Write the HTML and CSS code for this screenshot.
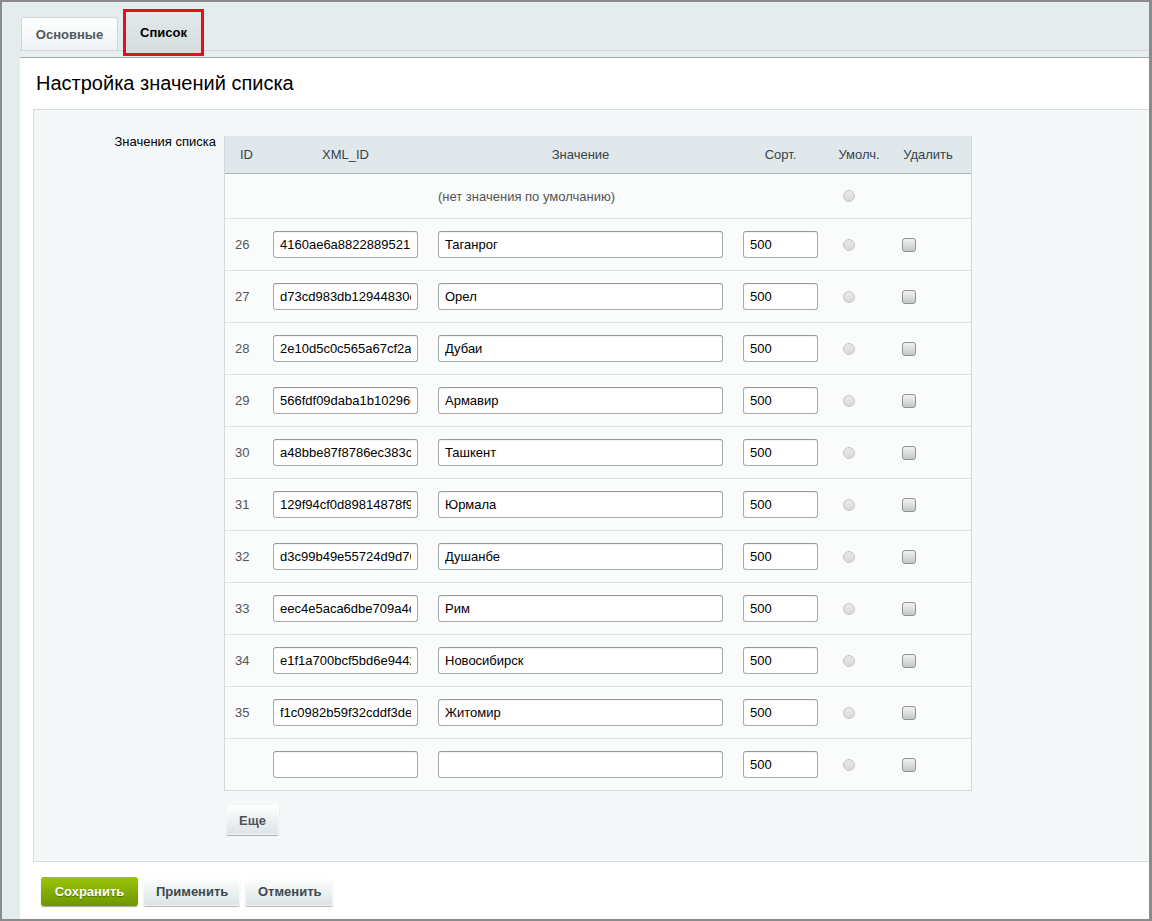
FILE: index.html
```html
<!DOCTYPE html>
<html lang="ru">
<head>
    <meta charset="UTF-8">
    <title>Настройка значений списка</title>
    <link rel="stylesheet" href="styles.css">
</head>
<body>
    <div class="window">
        <div class="tabs">
            <div class="tab">Основные</div>
            <div class="tab tab-active">Список</div>
        </div>
        <div class="tab-line"></div>

        <div class="content">
            <h1 class="title">Настройка значений списка</h1>

            <div class="panel">
                <div class="field-label">Значения списка</div>
                <div class="field">
                    <div class="list-wrap">
                        <table class="list">
                            <colgroup>
                                <col class="c-id">
                                <col class="c-xml">
                                <col class="c-val">
                                <col class="c-sort">
                                <col class="c-def">
                                <col class="c-del">
                            </colgroup>
                            <thead>
                                <tr>
                                    <th class="h-id">ID</th>
                                    <th class="h-xml">XML_ID</th>
                                    <th>Значение</th>
                                    <th>Сорт.</th>
                                    <th class="h-def">Умолч.</th>
                                    <th class="h-del">Удалить</th>
                                </tr>
                            </thead>
                            <tbody>
                                <tr class="row-none">
                                    <td colspan="4" class="none-text">(нет значения по умолчанию)</td>
                                    <td class="td-def"><input type="radio" name="def" class="radio"></td>
                                    <td></td>
                                </tr>
                                <tr>
                                    <td class="td-id">26</td>
                                    <td class="td-xml"><input class="inp inp-xml" type="text" value="4160ae6a88228895213cf0b1e4a7d2f6"></td>
                                    <td class="td-val"><input class="inp inp-val" type="text" value="Таганрог"></td>
                                    <td class="td-sort"><input class="inp inp-sort" type="text" value="500"></td>
                                    <td class="td-def"><input type="radio" name="def" class="radio"></td>
                                    <td class="td-del"><input type="checkbox" class="check"></td>
                                </tr>
                                <tr>
                                    <td class="td-id">27</td>
                                    <td class="td-xml"><input class="inp inp-xml" type="text" value="d73cd983db12944830c5e7a19b02f4d8"></td>
                                    <td class="td-val"><input class="inp inp-val" type="text" value="Орел"></td>
                                    <td class="td-sort"><input class="inp inp-sort" type="text" value="500"></td>
                                    <td class="td-def"><input type="radio" name="def" class="radio"></td>
                                    <td class="td-del"><input type="checkbox" class="check"></td>
                                </tr>
                                <tr>
                                    <td class="td-id">28</td>
                                    <td class="td-xml"><input class="inp inp-xml" type="text" value="2e10d5c0c565a67cf2a4b91d07e3c6f5"></td>
                                    <td class="td-val"><input class="inp inp-val" type="text" value="Дубаи"></td>
                                    <td class="td-sort"><input class="inp inp-sort" type="text" value="500"></td>
                                    <td class="td-def"><input type="radio" name="def" class="radio"></td>
                                    <td class="td-del"><input type="checkbox" class="check"></td>
                                </tr>
                                <tr>
                                    <td class="td-id">29</td>
                                    <td class="td-xml"><input class="inp inp-xml" type="text" value="566fdf09daba1b102960e8c4a3f7b215"></td>
                                    <td class="td-val"><input class="inp inp-val" type="text" value="Армавир"></td>
                                    <td class="td-sort"><input class="inp inp-sort" type="text" value="500"></td>
                                    <td class="td-def"><input type="radio" name="def" class="radio"></td>
                                    <td class="td-del"><input type="checkbox" class="check"></td>
                                </tr>
                                <tr>
                                    <td class="td-id">30</td>
                                    <td class="td-xml"><input class="inp inp-xml" type="text" value="a48bbe87f8786ec383c1d92f5b0e6a47"></td>
                                    <td class="td-val"><input class="inp inp-val" type="text" value="Ташкент"></td>
                                    <td class="td-sort"><input class="inp inp-sort" type="text" value="500"></td>
                                    <td class="td-def"><input type="radio" name="def" class="radio"></td>
                                    <td class="td-del"><input type="checkbox" class="check"></td>
                                </tr>
                                <tr>
                                    <td class="td-id">31</td>
                                    <td class="td-xml"><input class="inp inp-xml" type="text" value="129f94cf0d89814878f93a6e2c5b1d07"></td>
                                    <td class="td-val"><input class="inp inp-val" type="text" value="Юрмала"></td>
                                    <td class="td-sort"><input class="inp inp-sort" type="text" value="500"></td>
                                    <td class="td-def"><input type="radio" name="def" class="radio"></td>
                                    <td class="td-del"><input type="checkbox" class="check"></td>
                                </tr>
                                <tr>
                                    <td class="td-id">32</td>
                                    <td class="td-xml"><input class="inp inp-xml" type="text" value="d3c99b49e55724d9d76a0f81c2e4b5a3"></td>
                                    <td class="td-val"><input class="inp inp-val" type="text" value="Душанбе"></td>
                                    <td class="td-sort"><input class="inp inp-sort" type="text" value="500"></td>
                                    <td class="td-def"><input type="radio" name="def" class="radio"></td>
                                    <td class="td-del"><input type="checkbox" class="check"></td>
                                </tr>
                                <tr>
                                    <td class="td-id">33</td>
                                    <td class="td-xml"><input class="inp inp-xml" type="text" value="eec4e5aca6dbe709a4c3b8f2d1e0a956"></td>
                                    <td class="td-val"><input class="inp inp-val" type="text" value="Рим"></td>
                                    <td class="td-sort"><input class="inp inp-sort" type="text" value="500"></td>
                                    <td class="td-def"><input type="radio" name="def" class="radio"></td>
                                    <td class="td-del"><input type="checkbox" class="check"></td>
                                </tr>
                                <tr>
                                    <td class="td-id">34</td>
                                    <td class="td-xml"><input class="inp inp-xml" type="text" value="e1f1a700bcf5bd6e94421c7d8a3b0f65"></td>
                                    <td class="td-val"><input class="inp inp-val" type="text" value="Новосибирск"></td>
                                    <td class="td-sort"><input class="inp inp-sort" type="text" value="500"></td>
                                    <td class="td-def"><input type="radio" name="def" class="radio"></td>
                                    <td class="td-del"><input type="checkbox" class="check"></td>
                                </tr>
                                <tr>
                                    <td class="td-id">35</td>
                                    <td class="td-xml"><input class="inp inp-xml" type="text" value="f1c0982b59f32cddf3de7a4b6e1c0d28"></td>
                                    <td class="td-val"><input class="inp inp-val" type="text" value="Житомир"></td>
                                    <td class="td-sort"><input class="inp inp-sort" type="text" value="500"></td>
                                    <td class="td-def"><input type="radio" name="def" class="radio"></td>
                                    <td class="td-del"><input type="checkbox" class="check"></td>
                                </tr>
                                <tr>
                                    <td class="td-id"></td>
                                    <td class="td-xml"><input class="inp inp-xml" type="text" value=""></td>
                                    <td class="td-val"><input class="inp inp-val" type="text" value=""></td>
                                    <td class="td-sort"><input class="inp inp-sort" type="text" value="500"></td>
                                    <td class="td-def"><input type="radio" name="def" class="radio"></td>
                                    <td class="td-del"><input type="checkbox" class="check"></td>
                                </tr>
                            </tbody>
                        </table>
                    </div>
                    <button class="btn btn-more" type="button">Еще</button>
                </div>
            </div>

            <div class="actions">
                <button class="btn btn-save" type="button">Сохранить</button>
                <button class="btn" type="button">Применить</button>
                <button class="btn" type="button">Отменить</button>
            </div>
        </div>
    </div>
</body>
</html>
```

FILE: styles.css
```css
body {
    margin: 0;
    font-family: "Liberation Sans", Arial, sans-serif;
    font-size: 13px;
    color: #000;
}

.window {
    width: 1152px;
    height: 921px;
    box-sizing: border-box;
    border: 2px solid #8b8b8b;
    border-right-width: 3px;
    background: #e5ecee;
    padding-left: 18px;
    display: flex;
    flex-direction: column;
}

/* tabs */
.tabs {
    height: 48px;
    display: flex;
    align-items: flex-end;
    gap: 5px;
    padding-left: 1px;
}

.tab {
    width: 97px;
    height: 33px;
    box-sizing: border-box;
    border: 1px solid #cfd7da;
    border-bottom: none;
    border-radius: 3px 3px 0 0;
    background: linear-gradient(#ffffff, #eef2f3);
    display: flex;
    align-items: center;
    justify-content: center;
    font-weight: bold;
    color: #4d5a60;
}

.tab-active {
    width: 81px;
    height: 47px;
    margin-bottom: -6px;
    border: 3px solid #e3101a;
    border-radius: 0;
    background: linear-gradient(#e3e9eb, #d4dcdf);
    color: #000;
    position: relative;
    z-index: 1;
}

.tab-line {
    height: 6px;
    background: #e9eff1;
    border-top: 1px solid #d0d8db;
    border-bottom: 1px solid #a0a9ac;
}

/* content */
.content {
    flex: 1;
    background: #fff;
}

.title {
    margin: 0;
    padding: 13px 0 14px 16px;
    font-size: 20px;
    font-weight: normal;
    line-height: 24px;
}

.panel {
    margin-left: 13px;
    height: 753px;
    box-sizing: border-box;
    border: 1px solid #d6dee1;
    border-right: none;
    background: #f5f8f9;
    padding-top: 26px;
    display: flex;
}

.field-label {
    width: 182px;
    margin-right: 8px;
    margin-top: -2px;
    text-align: right;
    line-height: 15px;
}

.list-wrap {
    width: 748px;
    box-sizing: border-box;
    border: 1px solid #d3dadd;
    border-top: none;
    background: #fafbfb;
}

.list {
    width: 100%;
    table-layout: fixed;
    border-collapse: separate;
    border-spacing: 0;
}

.c-id { width: 43px; }
.c-xml { width: 160px; }
.c-val { width: 305px; }
.c-sort { width: 95px; }
.c-def { width: 52px; }
.c-del { width: 91px; }

.list th {
    height: 37px;
    padding: 0;
    background: #e0e8eb;
    border-bottom: 1px solid #a8b3b7;
    font-weight: normal;
    color: #36424a;
    text-align: center;
}

.list th.h-xml { padding-right: 5px; }
.list th.h-def { padding-left: 10px; }
.list th.h-del { padding-left: 5px; }

.list td {
    height: 51px;
    padding: 0;
    border-bottom: 1px solid #dde2e4;
    vertical-align: middle;
}

.list tbody tr:last-child td {
    border-bottom: none;
}

.list .row-none td {
    height: 44px;
}

.none-text {
    text-align: center;
    color: #555;
}

.td-id {
    padding-left: 10px !important;
    color: #555;
}

.td-xml { padding-left: 5px !important; }
.td-val, .td-sort { padding-left: 10px !important; }
.td-def { padding-left: 15px !important; }
.td-del { padding-left: 22px !important; }

.inp {
    display: block;
    height: 27px;
    box-sizing: border-box;
    margin: 0;
    padding: 0 6px;
    border: 1px solid #a5abae;
    border-top-color: #92989b;
    border-radius: 3px;
    background: #fff;
    box-shadow: inset 0 1px 1px rgba(0, 0, 0, 0.06);
    font-family: "Liberation Sans", Arial, sans-serif;
    font-size: 13px;
    color: #000;
    outline: none;
}

.inp-xml { width: 145px; }
.inp-val { width: 285px; }
.inp-sort { width: 75px; }

.radio {
    appearance: none;
    display: block;
    width: 12px;
    height: 12px;
    margin: 0;
    border: 1px solid #c3c6c8;
    border-radius: 50%;
    background: linear-gradient(#eaeaea, #d9d9d9);
    box-sizing: border-box;
}

.check {
    appearance: none;
    display: block;
    width: 14px;
    height: 14px;
    margin: 0;
    border: 1px solid #8e9295;
    border-radius: 3px;
    background: linear-gradient(#f2f2f2, #c4c7c9);
    box-sizing: border-box;
}

/* buttons */
.btn {
    height: 29px;
    padding: 0 13px;
    border: none;
    border-radius: 3px;
    background: linear-gradient(#ffffff, #dbe3e6);
    box-shadow: 0 1px 1px rgba(0, 0, 0, 0.3), inset 0 0 0 1px rgba(255, 255, 255, 0.6);
    font-family: "Liberation Sans", Arial, sans-serif;
    font-size: 13px;
    font-weight: bold;
    color: #3c4a52;
}

.btn-more {
    display: block;
    margin: 14px 0 0 2px;
    width: 53px;
    height: 30px;
    padding: 0;
    color: #4c545a;
}

.actions {
    display: flex;
    gap: 5px;
    margin: 15px 0 0 21px;
}

.btn-save {
    width: 97px;
    background: linear-gradient(#9cc40a, #6d9700);
    color: #fff;
    text-shadow: 0 1px 1px rgba(0, 0, 0, 0.35);
    box-shadow: 0 1px 1px rgba(0, 0, 0, 0.35);
}

.actions .btn:nth-child(2) { width: 97px; }
.actions .btn:nth-child(3) { width: 88px; }
```
